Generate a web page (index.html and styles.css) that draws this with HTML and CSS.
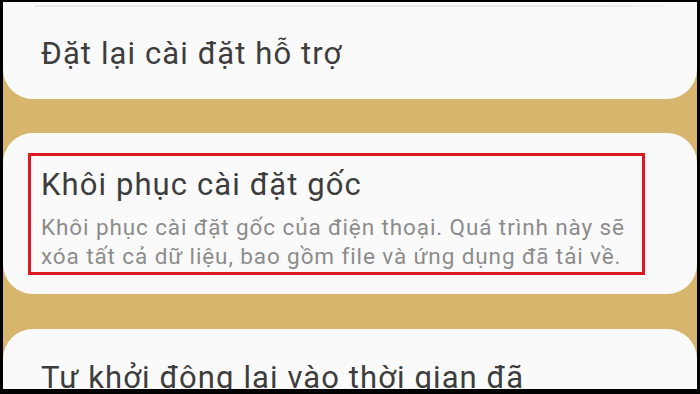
FILE: index.html
```html
<!DOCTYPE html>
<html lang="vi">
<head>
<meta charset="utf-8">
<title>Cài đặt</title>
<link rel="stylesheet" href="styles.css">
</head>
<body>
<div class="frame">
  <div class="list">
    <div class="card card-top">
      <div class="edge"></div>
      <div class="title title-top">Đặt lại cài đặt hỗ trợ</div>
    </div>
    <div class="card card-mid">
      <div class="highlight">
        <div class="title">Khôi phục cài đặt gốc</div>
        <div class="desc">Khôi phục cài đặt gốc của điện thoại. Quá trình này sẽ<br>xóa tất cả dữ liệu, bao gồm file và ứng dụng đã tải về.</div>
      </div>
    </div>
    <div class="card card-bottom">
      <div class="title">Tự khởi động lại vào thời gian đã</div>
    </div>
  </div>
</div>
</body>
</html>
```

FILE: styles.css
```css
* { box-sizing: border-box; }

html, body {
  margin: 0;
  padding: 0;
  background: #000;
}

.frame {
  width: 700px;
  height: 394px;
  border-style: solid;
  border-color: #000;
  border-width: 2px 3px 5px 3px;
  background: #d7b56d;
  overflow: hidden;
  font-family: Roboto, "Noto Sans", sans-serif;
}

.list {
  display: flex;
  flex-direction: column;
  gap: 34px;
}

.card {
  background: #fafafa;
  border-radius: 30px;
}

.card-top {
  height: 97px;
  border-radius: 0 0 30px 30px;
  padding: 0 20px 0 38px;
}

.edge {
  height: 2px;
  margin: 3px 10px 0 -6px;
  background: linear-gradient(to right, #e9e9e9 90%, #f5f5f5);
}

.title {
  font-size: 31px;
  line-height: 40px;
  letter-spacing: 1.1px;
  color: #3d3d3d;
  white-space: nowrap;
}

.title-top {
  margin-top: 27px;
}

.card-mid {
  height: 161px;
  padding: 20px 52px 0 25px;
}

.highlight {
  border: 3px solid #dc1a20;
  height: 122px;
  padding: 9px 0 0 10px;
}

.desc {
  margin-top: 8px;
  font-size: 22.5px;
  line-height: 29px;
  letter-spacing: 0.9px;
  color: #8c8c8c;
  white-space: nowrap;
}

.card-bottom {
  height: 120px;
  margin-top: 1px;
  padding: 29px 0 0 38px;
}
```
